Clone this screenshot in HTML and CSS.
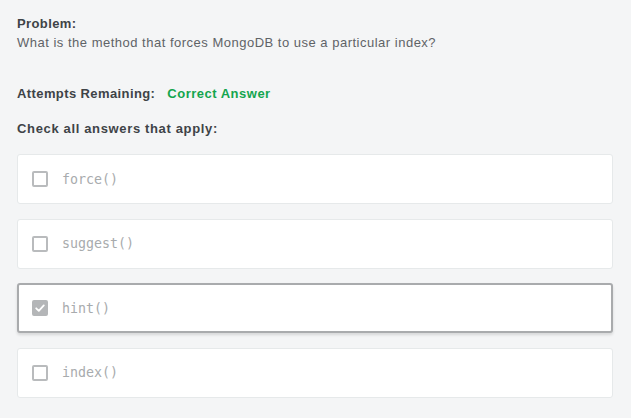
FILE: index.html
```html
<!DOCTYPE html>
<html>
<head>
<meta charset="utf-8">
<link rel="stylesheet" href="styles.css">
</head>
<body>
<div class="page">
  <div class="problem">
    <div class="label">Problem:</div>
    <div class="question">What is the method that forces MongoDB to use a particular index?</div>
  </div>
  <div class="attempts"><span class="label">Attempts Remaining:</span><span class="correct">Correct Answer</span></div>
  <div class="label instructions">Check all answers that apply:</div>
  <div class="options">
    <div class="option">
      <span class="box"></span>
      <span class="code">force()</span>
    </div>
    <div class="option">
      <span class="box"></span>
      <span class="code">suggest()</span>
    </div>
    <div class="option selected">
      <span class="box checked">
        <svg width="12" height="12" viewBox="0 0 12 12"><path d="M2.2 6.3 L4.8 8.8 L9.8 3.4" fill="none" stroke="#fff" stroke-width="1.8" stroke-linecap="round" stroke-linejoin="round"/></svg>
      </span>
      <span class="code">hint()</span>
    </div>
    <div class="option">
      <span class="box"></span>
      <span class="code">index()</span>
    </div>
  </div>
</div>
</body>
</html>
```
FILE: styles.css
```css
html, body {
  margin: 0;
  padding: 0;
  background: #f4f5f6;
}
.page {
  padding: 14px 18px 0 17px;
  font-family: "Liberation Sans", Arial, sans-serif;
  font-size: 13px;
  line-height: 19px;
  color: #5c6266;
}
.label {
  font-weight: bold;
  color: #3e4347;
  letter-spacing: 0.4px;
}
.question {
  color: #5f6367;
  letter-spacing: 0.5px;
}
.attempts {
  margin-top: 32px;
}
.correct {
  font-weight: bold;
  color: #13a54e;
  letter-spacing: 0.5px;
  margin-left: 12px;
}
.instructions {
  margin-top: 16px;
  letter-spacing: 0.65px;
}
.options {
  margin-top: 16px;
  display: flex;
  flex-direction: column;
  gap: 14.5px;
}
.option {
  height: 50px;
  box-sizing: border-box;
  background: #fff;
  border: 1px solid #e6e9ea;
  border-radius: 3px;
  display: flex;
  align-items: center;
  padding-left: 14px;
}
.option.selected {
  border: 2px solid #a9abad;
  padding-left: 13px;
  box-shadow: 0 2px 3px rgba(0,0,0,0.12);
}
.box {
  width: 16px;
  height: 16px;
  box-sizing: border-box;
  border: 2px solid #b9bbbd;
  border-radius: 2px;
  display: flex;
  align-items: center;
  justify-content: center;
  flex: none;
}
.box.checked {
  background: #b4b6b8;
  border-color: #b4b6b8;
}
.code {
  margin-left: 14px;
  font-family: "DejaVu Sans Mono", "Liberation Mono", monospace;
  font-size: 13.3px;
  color: #a8abad;
}
```
